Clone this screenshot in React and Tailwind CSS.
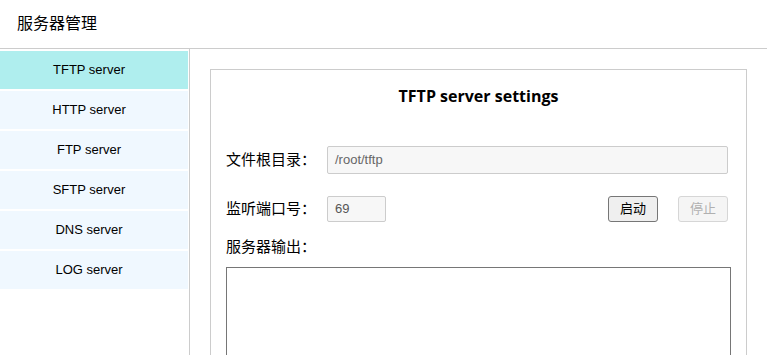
import React, { useState } from 'react';

const servers = ['TFTP server', 'HTTP server', 'FTP server', 'SFTP server', 'DNS server', 'LOG server'];

const cjk = { fontFamily: '"Liberation Sans", "Noto Sans CJK SC", sans-serif' };

const App = () => {
  const [active, setActive] = useState('TFTP server');

  return (
    <div className="h-screen flex flex-col bg-white text-black overflow-hidden" style={cjk}>
      <div className="h-[49px] shrink-0 border-b border-[#cccccc] flex items-center pl-[17px] text-[16px]">服务器管理</div>
      <div className="flex flex-1 min-h-0">
        <div className="w-[190px] shrink-0 border-r border-[#cccccc] pr-[1px] pt-[2px] flex flex-col gap-[2px]">
          {servers.map(s => (
            <div
              key={s}
              onClick={() => setActive(s)}
              className={`h-[38px] flex items-center justify-center pr-[10px] text-[13px] cursor-pointer ${active === s ? 'bg-[#afeeee]' : 'bg-[#f0f8ff]'}`}
            >
              {s}
            </div>
          ))}
        </div>
        <div className="flex-1 pt-[20px] px-[20px]">
          <div className="border border-[#cccccc] border-b-0 h-full px-[15px]">
            <div className="h-[52px] flex items-center justify-center text-[16px] font-bold font-['Open_Sans',sans-serif]">{active} settings</div>
            <div className="mt-[24px] h-[28px] flex items-center">
              <span className="w-[101px] shrink-0 text-[15px]">文件根目录：</span>
              <div className="flex-1 mr-[3px] h-[28px] bg-[#f7f7f7] border border-[#cccccc] rounded-[2px] flex items-center pl-[7px] text-[13px] text-[#666666]">/root/tftp</div>
            </div>
            <div className="mt-[22px] h-[26px] flex items-center">
              <span className="w-[101px] shrink-0 text-[15px]">监听端口号：</span>
              <div className="w-[59px] h-[26px] bg-[#f7f7f7] border border-[#cccccc] rounded-[2px] flex items-center pl-[7px] text-[13px] text-[#555555]">69</div>
              <button className="ml-auto w-[50px] h-[26px] bg-[#efefef] border border-[#767676] rounded-[3px] text-[13px] text-black">启动</button>
              <button disabled className="ml-[20px] mr-[3px] w-[50px] h-[26px] bg-[#f5f5f5] border border-[#d6d6d6] rounded-[3px] text-[13px] text-[#b0b0b0]">停止</button>
            </div>
            <div className="mt-[15px] leading-[20px] text-[15px]">服务器输出：</div>
            <div className="mt-[10px] h-[150px] border border-[#767676]"></div>
          </div>
        </div>
      </div>
    </div>
  );
};

export default App;
